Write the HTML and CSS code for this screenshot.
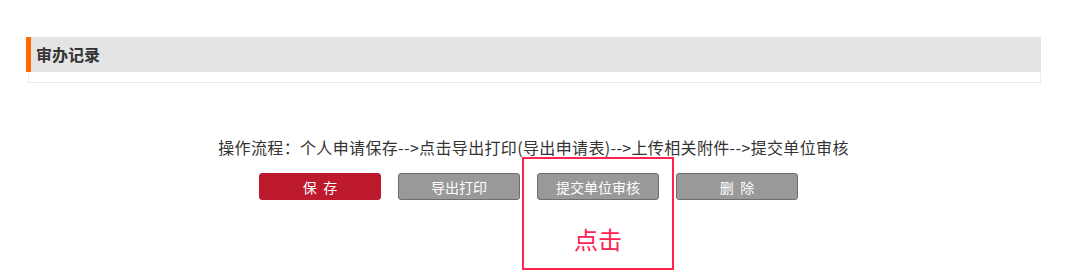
FILE: index.html
```html
<!DOCTYPE html>
<html lang="zh">
<head>
<meta charset="utf-8">
<link rel="stylesheet" href="styles.css">
</head>
<body>
<div class="page">
  <div class="section">
    <div class="section-head">审办记录</div>
    <div class="section-body"></div>
  </div>
  <div class="flow">操作流程：个人申请保存--&gt;点击导出打印(导出申请表)--&gt;上传相关附件--&gt;提交单位审核</div>
  <div class="actions">
    <button class="btn btn-red">保&nbsp;&nbsp;存</button>
    <button class="btn btn-gray">导出打印</button>
    <button class="btn btn-gray">提交单位审核</button>
    <button class="btn btn-gray">删&nbsp;&nbsp;除</button>
  </div>
  <div class="callout"><span class="callout-text">点击</span></div>
</div>
</body>
</html>
```

FILE: styles.css
```css
html, body {
  margin: 0;
  padding: 0;
  background: #fff;
}
body {
  font-family: "Noto Sans CJK SC", "Noto Sans", sans-serif;
  color: #333;
  width: 1076px;
  height: 278px;
  overflow: hidden;
}
.page {
  position: relative;
  width: 1015px;
  margin-left: 26px;
  padding-top: 37px;
}
.section-head {
  height: 35px;
  line-height: 35px;
  background: #e4e4e4;
  border-left: 5px solid #ff6a00;
  padding-left: 5px;
  font-size: 16px;
  font-weight: bold;
  color: #333;
}
.section-body {
  margin-left: 2px;
  height: 10px;
  border: 1px solid #ebebeb;
  border-top: none;
}
.flow {
  margin-top: 52px;
  text-align: center;
  font-size: 16px;
  line-height: 24px;
  letter-spacing: 0.35px;
  color: #333;
}
.actions {
  display: flex;
  justify-content: center;
  gap: 17px;
  margin-top: 14px;
  padding-right: 10px;
}
.btn {
  width: 122px;
  height: 27px;
  border-radius: 3px;
  font-family: "Noto Sans CJK SC", sans-serif;
  font-size: 14px;
  color: #fff;
  padding: 0;
  cursor: pointer;
}
.btn-red {
  background: #be1a2e;
  border: 1px solid #be1a2e;
}
.btn-gray {
  background: #999;
  border: 1px solid #6e6e6e;
}
.callout {
  position: absolute;
  left: 496px;
  top: 157px;
  width: 148px;
  height: 109px;
  border: 2px solid #ff2352;
  display: flex;
  justify-content: center;
  align-items: flex-end;
}
.callout-text {
  font-size: 24px;
  line-height: 30px;
  color: #ff2352;
  margin-bottom: 14px;
}
```
